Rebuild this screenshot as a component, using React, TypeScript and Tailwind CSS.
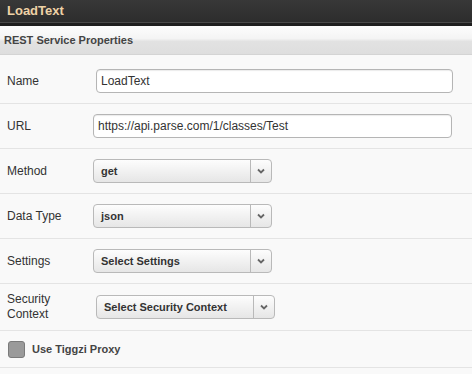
import { ReactNode } from "react";

const FONT = { fontFamily: '"Liberation Sans", Arial, sans-serif' };

function Row({ label, children, className = "" }: { label: ReactNode; children: ReactNode; className?: string }) {
  return (
    <div className={`flex items-center border-b border-[#e4e4e4] pl-[7px] ${className}`}>
      <div className="w-[86px] shrink-0 text-[12px] leading-[15px] text-[#333]">{label}</div>
      {children}
    </div>
  );
}

function TextInput({ value, className = "" }: { value: string; className?: string }) {
  return (
    <div
      className={`h-[24px] rounded-[4px] border border-[#b5b5b5] bg-white px-[4px] text-[12px] leading-[22px] text-[#333] shadow-[inset_0_1px_1px_rgba(0,0,0,0.08)] ${className}`}
    >
      {value}
    </div>
  );
}

function Select({ value, className = "" }: { value: string; className?: string }) {
  return (
    <div
      className={`flex h-[24px] w-[179px] rounded-[4px] border border-[#b9b9b9] bg-gradient-to-b from-[#fdfdfd] to-[#e6e6e6] text-[11px] font-bold text-[#333] ${className}`}
    >
      <div className="flex-1 pl-[7px] leading-[22px]">{value}</div>
      <div className="flex w-[21px] items-center justify-center border-l border-[#b9b9b9]">
        <svg width="8" height="6" viewBox="0 0 8 6">
          <path d="M1 1.5 L4 4.5 L7 1.5" fill="none" stroke="#666" strokeWidth="1.8" />
        </svg>
      </div>
    </div>
  );
}

export default function App() {
  return (
    <div className="h-[374px] w-[472px] overflow-hidden bg-[#f9f9f9]" style={FONT}>
      {/* title bar */}
      <div className="h-[26px] border-b-[3px] border-[#1f1f1f] bg-gradient-to-b from-[#383838] to-[#2c2c2c] shadow-[inset_0_-1px_0_#4a4a4a]">
        <div className="pl-[7px] pt-[3px] text-[13px] font-bold leading-[16px] text-[#efd2a6]">LoadText</div>
      </div>

      {/* section header */}
      <div className="h-[29px] border-b border-[#d4d4d4] bg-[linear-gradient(#fdfdfd,#f4f4f4_45%,#e2e2e2_55%,#dedede)] pl-[4px] text-[11px] font-bold leading-[28px] text-[#444]">
        REST Service Properties
      </div>

      <Row label="Name" className="h-[49px] pt-[4px]">
        <TextInput value="LoadText" className="ml-[3px] w-[357px]" />
      </Row>
      <Row label="URL" className="h-[45px]">
        <TextInput value="https://api.parse.com/1/classes/Test" className="w-[359px]" />
      </Row>
      <Row label="Method" className="h-[45px]">
        <Select value="get" />
      </Row>
      <Row label="Data Type" className="h-[45px]">
        <Select value="json" />
      </Row>
      <Row label="Settings" className="h-[45px]">
        <Select value="Select Settings" />
      </Row>
      <Row label={<>Security<br />Context</>} className="h-[47px]">
        <Select value="Select Security Context" className="ml-[3px]" />
      </Row>
      <div className="flex h-[37px] items-center gap-[7px] border-b border-[#e4e4e4] pl-[8px]">
        <div className="h-[17px] w-[17px] rounded-[3px] border border-[#7a7a7a] bg-[#9a9a9a]" />
        <span className="text-[11px] font-bold text-[#444]">Use Tiggzi Proxy</span>
      </div>
    </div>
  );
}
